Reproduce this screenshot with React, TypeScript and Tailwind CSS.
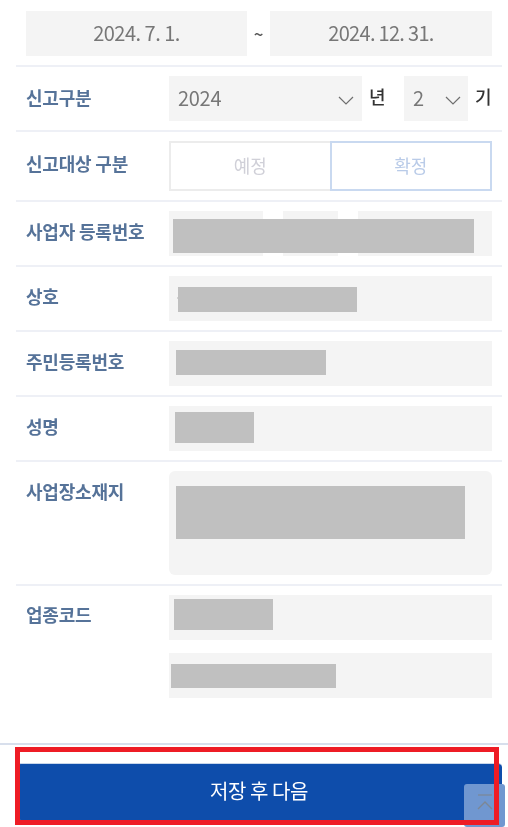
import React from "react";

const font = { fontFamily: '"Noto Sans CJK KR", "Noto Sans", sans-serif' };

function Chevron({ className }: { className: string }) {
  return (
    <svg className={className} width="16" height="9" viewBox="0 0 16 9" fill="none">
      <path d="M1 1l7 7 7-7" stroke="#6f6f6f" strokeWidth="1.2" />
    </svg>
  );
}

function Bar({ className }: { className: string }) {
  return <div className={`absolute bg-[#c0c0c0] ${className}`} />;
}

function Label({ children }: { children: React.ReactNode }) {
  return (
    <div className="w-[143px] shrink-0 -translate-y-[1px] text-[18px] leading-[24px] font-bold tracking-[-0.2px] text-[#567399] blur-[0.5px]">
      {children}
    </div>
  );
}

function Row({ children, last }: { children: React.ReactNode; last?: boolean }) {
  return (
    <div className={`flex items-start py-[9px] pl-[10px] pr-[10px] ${last ? "" : "border-b-2 border-[#eef0f6]"}`}>
      {children}
    </div>
  );
}

function Field({ children }: { children?: React.ReactNode }) {
  return <div className="relative h-[45px] w-[323px] bg-[#f4f4f4]">{children}</div>;
}

export default function App() {
  return (
    <div style={font} className="relative flex h-[827px] w-[508px] flex-col overflow-hidden bg-white">
      <div className="ml-4 mr-[6px] flex-1">
        <div className="flex items-center justify-between border-b-2 border-[#eef0f6] pt-[11px] pb-[9px] pl-[10px] pr-[10px]">
          <div className="flex h-[45px] w-[221px] items-center justify-center bg-[#f4f4f4] text-[20px] tracking-[-0.5px]">
            <span className="-translate-y-[1px] text-[#777777] blur-[0.5px]">2024. 7. 1.</span>
          </div>
          <span className="text-[17px] font-medium text-[#555555] blur-[0.4px]">~</span>
          <div className="flex h-[45px] w-[222px] items-center justify-center bg-[#f4f4f4] text-[20px] tracking-[-0.7px]">
            <span className="-translate-y-[1px] text-[#777777] blur-[0.5px]">2024. 12. 31.</span>
          </div>
        </div>

        <Row>
          <div className="flex h-[44px] items-center"><Label>신고구분</Label></div>
          <div className="relative flex h-[45px] w-[193px] items-center bg-[#f4f4f4] pl-[9px] text-[20px] tracking-[-0.3px]">
            <span className="-translate-y-[1px] text-[#777777] blur-[0.5px]">2024</span>
            <Chevron className="absolute right-[8px] top-[20px]" />
          </div>
          <span className="ml-[7px] w-[35px] -translate-y-[2px] text-[18px] font-medium leading-[45px] text-[#333333] blur-[0.4px]">년</span>
          <div className="relative flex h-[45px] w-[64px] items-center bg-[#f4f4f4] pl-[9px] text-[20px]">
            <span className="-translate-y-[1px] text-[#777777] blur-[0.5px]">2</span>
            <Chevron className="absolute right-[7px] top-[20px]" />
          </div>
          <span className="ml-[7px] -translate-y-[2px] text-[18px] font-medium leading-[45px] text-[#333333] blur-[0.4px]">기</span>
        </Row>

        <Row>
          <div className="flex h-[46px] items-center"><Label>신고대상 구분</Label></div>
          <div className="flex h-[50px] w-[323px]">
            <div className="flex flex-1 items-center justify-center border-2 border-r-0 border-[#ececec] text-[18px]">
              <span className="-translate-y-[1px] text-[#d0d0d8] blur-[0.5px]">예정</span>
            </div>
            <div className="flex flex-1 items-center justify-center border-2 border-[#c9d9f0] text-[18px]">
              <span className="-translate-y-[1px] text-[#b9cbe8] blur-[0.5px]">확정</span>
            </div>
          </div>
        </Row>

        <Row>
          <div className="flex h-[42px] items-center"><Label>사업자 등록번호</Label></div>
          <div className="relative flex h-[45px] w-[323px] justify-between">
            <div className="h-[45px] w-[94px] bg-[#f4f4f4]" />
            <div className="h-[45px] w-[55px] bg-[#f4f4f4]" />
            <div className="h-[45px] w-[134px] bg-[#f4f4f4]" />
            <Bar className="left-[4px] top-[8px] h-[34px] w-[301px]" />
          </div>
        </Row>

        <Row>
          <div className="flex h-[42px] items-center"><Label>상호</Label></div>
          <Field>
            <div className="absolute left-[8px] top-[21px] h-[2px] w-[2px] bg-[#d4d4d4]" />
            <Bar className="left-[9px] top-[11px] h-[25px] w-[179px]" />
          </Field>
        </Row>

        <Row>
          <div className="flex h-[42px] items-center"><Label>주민등록번호</Label></div>
          <Field><Bar className="left-[7px] top-[9px] h-[25px] w-[150px]" /></Field>
        </Row>

        <Row>
          <div className="flex h-[42px] items-center"><Label>성명</Label></div>
          <Field><Bar className="left-[6px] top-[6px] h-[31px] w-[79px]" /></Field>
        </Row>

        <Row>
          <div className="flex h-[42px] items-center"><Label>사업장소재지</Label></div>
          <div className="relative h-[104px] w-[323px] rounded-[6px] bg-[#f4f4f4]">
            <Bar className="left-[7px] top-[15px] h-[53px] w-[289px]" />
          </div>
        </Row>

        <Row last>
          <div className="flex h-[40px] items-center"><Label>업종코드</Label></div>
          <div className="flex flex-col gap-[13px]">
            <Field><Bar className="left-[5px] top-[4px] h-[31px] w-[99px]" /></Field>
            <Field><Bar className="left-[2px] top-[11px] h-[24px] w-[165px]" /></Field>
          </div>
        </Row>
      </div>

      <div className="h-[84px] shrink-0 border-t-2 border-[#d8dfec] pt-[18px]">
        <div className="ml-[17px] mr-[6px] flex h-[57px] items-center justify-center rounded-[4px] border-t border-[#c8d6ea] bg-[#0e4dab] pr-[1px] text-[20px] tracking-[-0.4px] text-white">
          <span className="-translate-y-[1px] blur-[0.4px]">저장 후 다음</span>
        </div>
      </div>

      <div className="absolute left-[464px] top-[784px] flex h-[43px] w-[41px] flex-col items-center rounded-[3px] bg-[#7097d0] pt-[5px]">
        <svg width="16" height="22" viewBox="0 0 16 22" fill="none">
          <path d="M1 6h14" stroke="#7d8794" strokeWidth="1.2" />
          <path d="M1 20l7-7 7 7" stroke="#7d8794" strokeWidth="1.4" />
        </svg>
      </div>

      <div className="absolute left-[15px] top-[747px] h-[78px] w-[484px] border-[5px] border-[#ee1c25]" />
    </div>
  );
}
